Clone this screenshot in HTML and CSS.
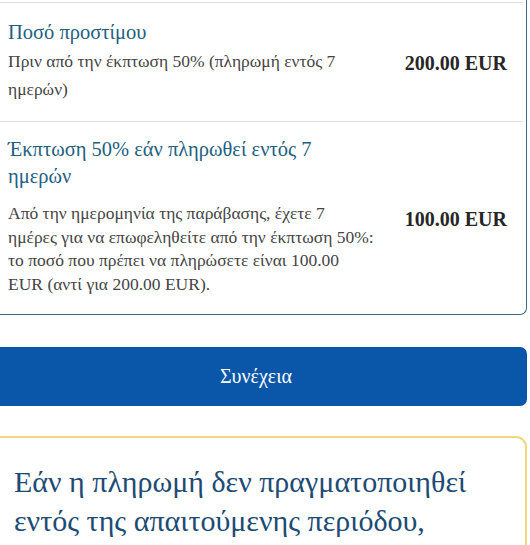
FILE: index.html
```html
<!DOCTYPE html>
<html lang="el">
<head>
<meta charset="utf-8">
<title>Πρόστιμο</title>
<link rel="stylesheet" href="styles.css">
</head>
<body>
<div class="page">
  <div class="card">
    <div class="section first">
      <div class="title t1">Ποσό προστίμου</div>
      <div class="row">
        <div class="desc d1">Πριν από την έκπτωση 50% (πληρωμή εντός 7 ημερών)</div>
        <div class="amount a1">200.00 EUR</div>
      </div>
    </div>
    <div class="section second">
      <div class="title t2">Έκπτωση 50% εάν πληρωθεί εντός 7 ημερών</div>
      <div class="row">
        <div class="desc d2">Από την ημερομηνία της παράβασης, έχετε 7<br>ημέρες για να επωφεληθείτε από την έκπτωση 50%:<br>το ποσό που πρέπει να πληρώσετε είναι 100.00<br>EUR (αντί για 200.00 EUR).</div>
        <div class="amount a2">100.00 EUR</div>
      </div>
    </div>
  </div>
  <button class="continue" type="button">Συνέχεια</button>
  <div class="notice">
    <p class="notice-text">Εάν η πληρωμή δεν πραγματοποιηθεί εντός της απαιτούμενης περιόδου,</p>
  </div>
</div>
</body>
</html>
```
FILE: styles.css
```css
html, body {
  margin: 0;
  padding: 0;
  background: #ffffff;
  overflow: hidden;
}
body {
  font-family: "Liberation Serif", "Times New Roman", serif;
  color: #3b3b3b;
}
.page {
  margin-left: -15px;
  width: 542px;
  display: flex;
  flex-direction: column;
}
.card {
  margin-top: -20px;
  padding-top: 22px;
  border: 1px solid #3f6883;
  border-top: none;
  border-radius: 0 0 7px 0;
  background: #ffffff;
}
.section {
  margin-right: 3px;
  border-top: 1px solid #dcdfe2;
  padding-left: 22px;
  padding-right: 16px;
}
.section.first {
  padding-top: 16px;
  padding-bottom: 18px;
}
.section.second {
  padding-top: 14px;
  padding-bottom: 18px;
}
.row {
  display: flex;
  align-items: flex-start;
  justify-content: space-between;
}
.title {
  color: #23607f;
  font-size: 20.5px;
  line-height: 27px;
}
.title.t1 {
  margin-bottom: 1px;
}
.title.t2 {
  width: 360px;
  margin-bottom: 12px;
}
.desc {
  font-size: 17.5px;
  color: #444444;
}
.desc.d1 {
  width: 372px;
  line-height: 28px;
}
.desc.d2 {
  width: 378px;
  line-height: 23.5px;
}
.amount {
  font-size: 20px;
  font-weight: bold;
  color: #262626;
  line-height: 28px;
  white-space: nowrap;
}
.amount.a1 {
  margin-top: 2px;
}
.amount.a2 {
  margin-top: 3px;
}
.continue {
  margin-top: 32px;
  height: 59px;
  border: none;
  border-radius: 7px;
  background: #0a56a9;
  color: #ffffff;
  font-family: "Liberation Serif", "Times New Roman", serif;
  font-size: 20px;
  padding: 0;
  width: 100%;
}
.notice {
  margin-top: 30px;
  border: 2px solid #f1d77c;
  border-radius: 11px;
  padding: 25px 20px 20px 27px;
  background: #ffffff;
}
.notice-text {
  margin: 0;
  color: #1c4b74;
  font-size: 30px;
  line-height: 38.5px;
  width: 460px;
}
```
